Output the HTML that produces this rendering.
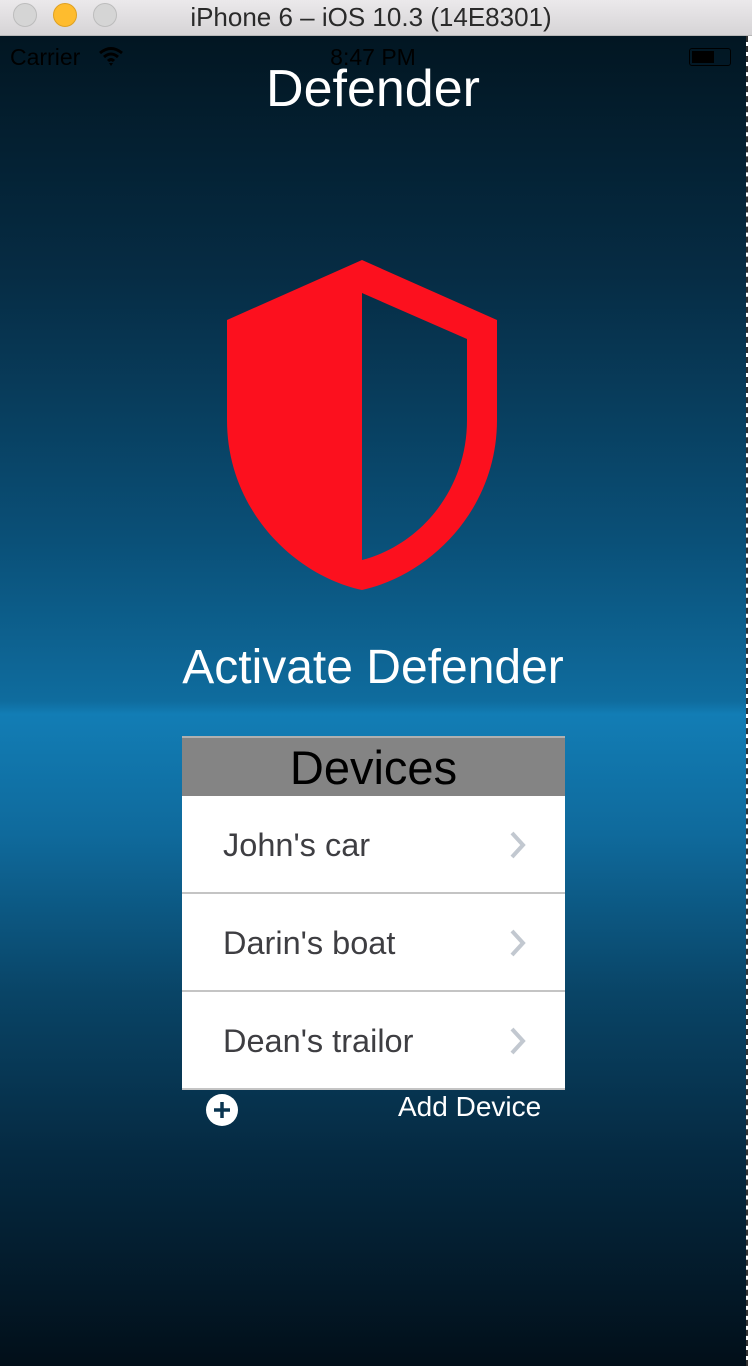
<!DOCTYPE html>
<html><head><meta charset="utf-8"><style>
*{margin:0;padding:0;box-sizing:border-box}
body{width:752px;height:1366px;overflow:hidden;font-family:"Liberation Sans",sans-serif;position:relative;background:#000}
.tb{position:absolute;left:0;top:0;width:752px;height:36px;background:linear-gradient(#ebe9eb,#d6d4d6);border-bottom:1px solid #b8b8b8}
.tb .t{position:absolute;left:0;width:742px;top:2px;text-align:center;font-size:26px;color:#2a2a2a}
.dot{position:absolute;top:3px;width:24px;height:24px;border-radius:50%;background:#d5d5d5;border:1px solid #bcbcbc}
.scr{position:absolute;left:0;top:36px;width:746px;height:1330px;background:linear-gradient(#021622 0%,#062c44 18%,#0a5078 38%,#0f6c9e 50%,#127db5 51%,#0f6a9c 60%,#094466 72%,#052a42 84%,#020f19 100%)}
.edge{position:absolute;left:746px;top:36px;width:6px;height:1330px;background:#fff;border-left:2px dashed #333}
.w{color:#fff;position:absolute;text-align:center;width:746px;left:0}
.tbl{position:absolute;left:182px;top:736px;width:383px}
.hd{height:60px;background:#848484;border-top:2px solid #b0b0b0;font-size:47px;text-align:center;line-height:60px;color:#000}
.row{height:98px;background:#fff;border-bottom:2px solid #c4c4c4;position:relative;font-size:32.5px;color:#3e3e42;padding-left:41px;line-height:98px}
.row svg{position:absolute;right:38px;top:35px}
</style></head><body>
<div class="tb"><div class="dot" style="left:13px"></div><div class="dot" style="left:53px;background:#febc2e;border-color:#dea123"></div><div class="dot" style="left:93px"></div><div class="t">iPhone 6 – iOS 10.3 (14E8301)</div></div>
<div class="scr"></div>
<div class="edge"></div>
<div style="position:absolute;left:10px;top:44px;font-size:23px;color:#000">Carrier</div>
<svg style="position:absolute;left:98px;top:46px" width="26" height="20"><path d="M2 7 Q13 -2 24 7 M6 11 Q13 5 20 11 M10 15 Q13 12 16 15" fill="none" stroke="#000" stroke-width="3"/><path d="M11 17 L13 20 L15 17 Z" fill="#000"/></svg>
<div style="position:absolute;left:0;width:746px;top:44px;text-align:center;font-size:23px;color:#000">8:47 PM</div>
<div style="position:absolute;left:689px;top:48px;width:42px;height:18px;border:1px solid #000;border-radius:3px"><div style="margin:2px;width:22px;height:12px;background:#000"></div></div>
<div class="w" style="top:59px;font-size:52px">Defender</div>
<svg style="position:absolute;left:0;top:0" width="752" height="620"><path fill="#fc101e" fill-rule="evenodd" d="M362 260 L497 320 L497 420 C497 510 430 575 362 590 C294 575 227 510 227 420 L227 320 Z M362 293 L467 339 L467 420 C467 490 420 545 362 560 Z"/></svg>
<div class="w" style="top:640px;font-size:48px">Activate Defender</div>
<div class="tbl">
<div class="hd">Devices</div>
<div class="row">John's car<svg width="18" height="28"><path d="M3 2 L14 14 L3 26" fill="none" stroke="#c2c8d0" stroke-width="4"/></svg></div>
<div class="row">Darin's boat<svg width="18" height="28"><path d="M3 2 L14 14 L3 26" fill="none" stroke="#c2c8d0" stroke-width="4"/></svg></div>
<div class="row">Dean's trailor<svg width="18" height="28"><path d="M3 2 L14 14 L3 26" fill="none" stroke="#c2c8d0" stroke-width="4"/></svg></div>
</div>
<svg style="position:absolute;left:205px;top:1093px" width="34" height="34"><circle cx="17" cy="17" r="16" fill="#fff"/><path d="M17 9 V25 M9 17 H25" stroke="#0a3550" stroke-width="3.5"/></svg>
<div style="position:absolute;left:398px;top:1091px;font-size:28px;color:#fff">Add Device</div>
</body></html>
